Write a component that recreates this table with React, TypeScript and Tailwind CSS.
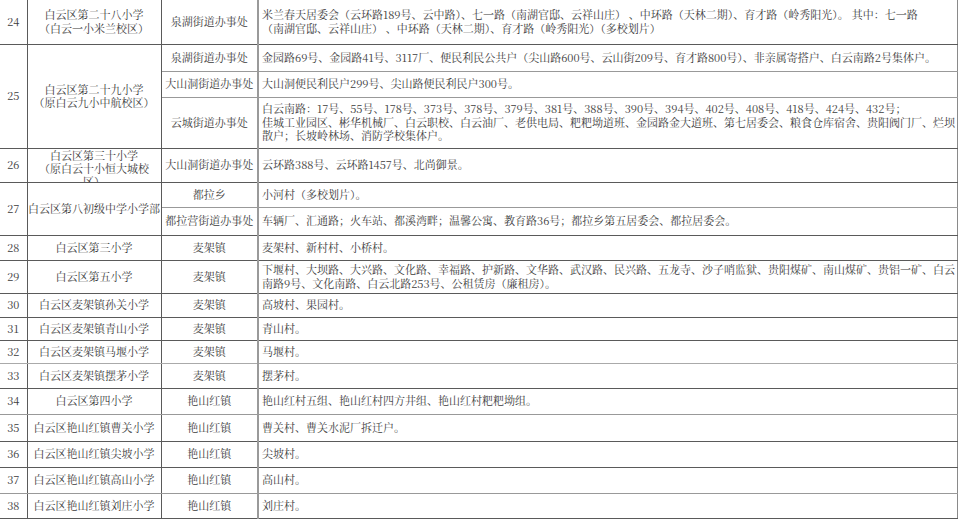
type Sub = { street: string; lines: string[]; h: string; line?: string };
type Row = { no: number; school: string[]; subs: Sub[]; clip?: boolean; line?: string };

const rows: Row[] = [
  {
    no: 24,
    school: ["白云区第二十八小学", "（白云一小米兰校区）"],
    subs: [
      {
        street: "泉湖街道办事处",
        h: "h-[44px]",
        lines: [
          "米兰春天居委会（云环路189号、云中路）、七一路（南湖官邸、云祥山庄） 、中环路（天林二期）、育才路（岭秀阳光）。 其中：七一路",
          "（南湖官邸、云祥山庄） 、中环路（天林二期）、育才路（岭秀阳光）（多校划片）",
        ],
      },
    ],
  },
  {
    no: 25,
    school: ["白云区第二十九小学", "（原白云九小中航校区）"],
    subs: [
      {
        street: "泉湖街道办事处",
        h: "h-[27px]",
        line: "border-b-[#999]",
        lines: [
          "金园路69号、金园路41号、3117厂、便民利民公共户（尖山路600号、云山街209号、育才路800号）、非亲属寄搭户、白云南路2号集体户。",
        ],
      },
      {
        street: "大山洞街道办事处",
        h: "h-[26px]",
        line: "border-b-[#999]",
        lines: ["大山洞便民利民户299号、尖山路便民利民户300号。"],
      },
      {
        street: "云城街道办事处",
        h: "h-[51px]",
        lines: [
          "白云南路：17号、55号、178号、373号、378号、379号、381号、388号、390号、394号、402号、408号、418号、424号、432号；",
          "佳城工业园区、彬华机械厂、白云职校、白云油厂、老供电局、粑粑坳道班、金园路金大道班、第七居委会、粮食仓库宿舍、贵阳阀门厂、烂坝",
          "散户；长坡岭林场、消防学校集体户。",
        ],
      },
    ],
  },
  {
    no: 26,
    school: ["白云区第三十小学", "（原白云十小恒大城校", "区）"],
    clip: true,
    subs: [
      {
        street: "大山洞街道办事处",
        h: "h-[34px]",
        lines: ["云环路388号、云环路1457号、北尚御景。"],
      },
    ],
  },
  {
    no: 27,
    school: ["白云区第八初级中学小学部"],
    subs: [
      { street: "都拉乡", h: "h-[25px]", line: "border-b-[#999]", lines: ["小河村（多校划片）。"] },
      {
        street: "都拉营街道办事处",
        h: "h-[28px]",
        lines: ["车辆厂、汇通路；火车站、都溪湾畔；温馨公寓、教育路36号；都拉乡第五居委会、都拉居委会。"],
      },
    ],
  },
  { no: 28, school: ["白云区第三小学"], subs: [{ street: "麦架镇", h: "h-[25px]", lines: ["麦架村、新村村、小桥村。"] }] },
  {
    no: 29,
    school: ["白云区第五小学"],
    subs: [
      {
        street: "麦架镇",
        h: "h-[33px]",
        lines: [
          "下堰村、大坝路、大兴路、文化路、幸福路、护新路、文华路、武汉路、民兴路、五龙寺、沙子哨监狱、贵阳煤矿、南山煤矿、贵铝一矿、白云",
          "南路9号、文化南路、白云北路253号、公租赁房（廉租房）。",
        ],
      },
    ],
  },
  { no: 30, school: ["白云区麦架镇孙关小学"], subs: [{ street: "麦架镇", h: "h-[24px]", lines: ["高坡村、果园村。"] }] },
  { no: 31, school: ["白云区麦架镇青山小学"], subs: [{ street: "麦架镇", h: "h-[23px]", lines: ["青山村。"] }] },
  {
    no: 32,
    school: ["白云区麦架镇马堰小学"],
    line: "border-b-[#aaa]",
    subs: [{ street: "麦架镇", h: "h-[23px]", line: "border-b-[#aaa]", lines: ["马堰村。"] }],
  },
  { no: 33, school: ["白云区麦架镇摆茅小学"], subs: [{ street: "麦架镇", h: "h-[25px]", lines: ["摆茅村。"] }] },
  {
    no: 34,
    school: ["白云区第四小学"],
    line: "border-b-[#999]",
    subs: [
      { street: "艳山红镇", h: "h-[26px]", line: "border-b-[#999]", lines: ["艳山红村五组、艳山红村四方井组、艳山红村粑粑坳组。"] },
    ],
  },
  { no: 35, school: ["白云区艳山红镇曹关小学"], subs: [{ street: "艳山红镇", h: "h-[27px]", lines: ["曹关村、曹关水泥厂拆迁户。"] }] },
  { no: 36, school: ["白云区艳山红镇尖坡小学"], subs: [{ street: "艳山红镇", h: "h-[26px]", lines: ["尖坡村。"] }] },
  {
    no: 37,
    school: ["白云区艳山红镇高山小学"],
    line: "border-b-[#999]",
    subs: [{ street: "艳山红镇", h: "h-[26px]", line: "border-b-[#999]", lines: ["高山村。"] }],
  },
  { no: 38, school: ["白云区艳山红镇刘庄小学"], subs: [{ street: "艳山红镇", h: "h-[25px]", lines: ["刘庄村。"] }] },
];

const cell = "border-b border-r border-[#5a5a5a] p-0 align-middle";

export default function App() {
  return (
    <div className="w-[960px] h-[520px] overflow-hidden bg-white text-[#3c3c3c] font-['Noto_Serif_CJK_SC','Noto_Sans_CJK_SC',serif] text-[11px] leading-[13.5px]">
      <table className="table-fixed border-collapse w-[957px]">
        <colgroup>
          <col className="w-[27px]" />
          <col className="w-[134px]" />
          <col className="w-[97px]" />
          <col className="w-[699px]" />
        </colgroup>
        <tbody>
          {rows.map((r) =>
            r.subs.map((s, i) => (
              <tr key={`${r.no}-${i}`} className={s.h}>
                {i === 0 && (
                  <>
                    <td rowSpan={r.subs.length} className={`${cell} ${r.line ?? ""} text-center`}>
                      {r.no}
                    </td>
                    <td rowSpan={r.subs.length} className={`${cell} ${r.line ?? ""} text-center`}>
                      {r.clip ? (
                        <div className="h-[33px] overflow-hidden pt-[-1px] flex flex-col items-center leading-[13px]">
                          {r.school.map((t) => (
                            <div key={t} className="whitespace-nowrap">{t}</div>
                          ))}
                        </div>
                      ) : (
                        <div className="overflow-hidden">
                          {r.school.map((t) => (
                            <div key={t} className="whitespace-nowrap">{t}</div>
                          ))}
                        </div>
                      )}
                    </td>
                  </>
                )}
                <td className={`${cell} ${s.line ?? ""} text-center whitespace-nowrap`}>{s.street}</td>
                <td className={`${cell} ${s.line ?? ""} border-l-2 border-l-[#9a9a9a] border-r-[#8a8a8a] px-[3px] text-left`}>
                  {s.lines.map((t) => (
                    <div key={t} className="whitespace-nowrap">{t}</div>
                  ))}
                </td>
              </tr>
            )),
          )}
        </tbody>
      </table>
    </div>
  );
}
